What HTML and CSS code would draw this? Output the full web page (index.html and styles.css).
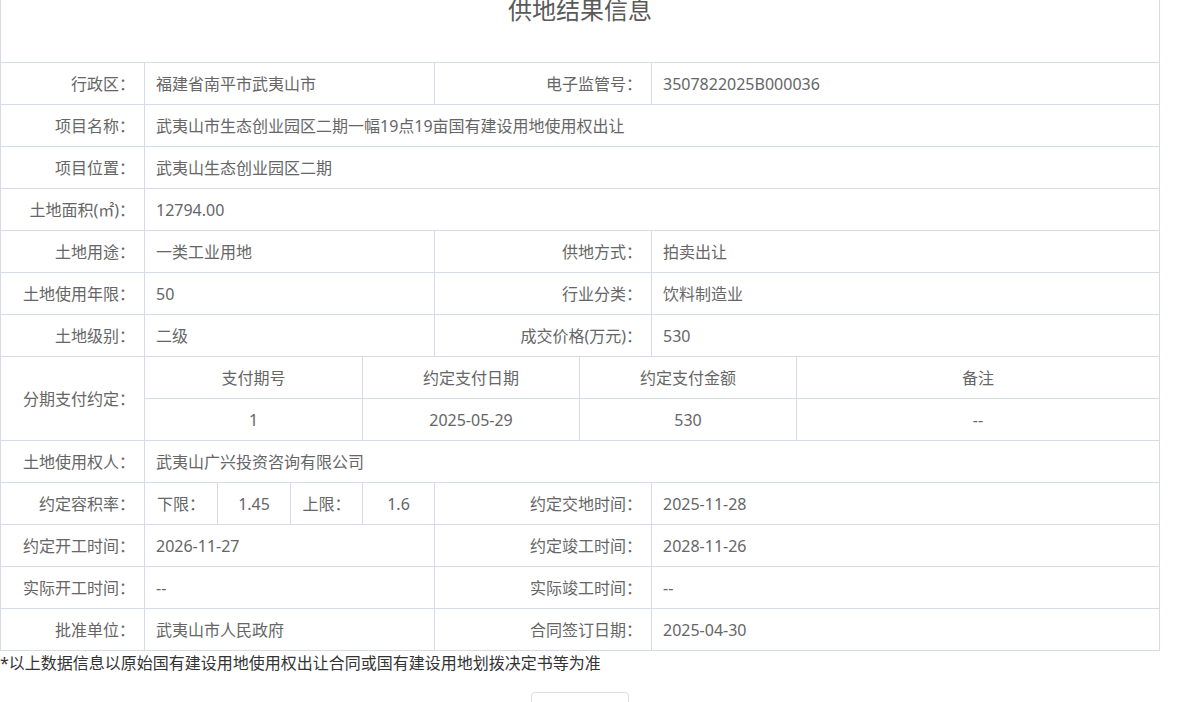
FILE: index.html
```html
<!DOCTYPE html>
<html lang="zh-CN">
<head>
<meta charset="utf-8">
<title>供地结果信息</title>
<link rel="stylesheet" href="styles.css">
</head>
<body>
<div class="page">
  <table class="info">
    <colgroup>
      <col class="c144"><col class="c73"><col class="c73"><col class="c72"><col class="c72"><col class="c145"><col class="c72"><col class="c145"><col class="c363">
    </colgroup>
    <tr class="title-row"><td colspan="9" class="title"><span>供地结果信息</span></td></tr>
    <tr>
      <td class="lbl">行政区：</td><td colspan="4" class="val">福建省南平市武夷山市</td>
      <td colspan="2" class="lbl">电子监管号：</td><td colspan="2" class="val">3507822025B000036</td>
    </tr>
    <tr>
      <td class="lbl">项目名称：</td><td colspan="8" class="val">武夷山市生态创业园区二期一幅19点19亩国有建设用地使用权出让</td>
    </tr>
    <tr>
      <td class="lbl">项目位置：</td><td colspan="8" class="val">武夷山生态创业园区二期</td>
    </tr>
    <tr>
      <td class="lbl">土地面积(㎡)：</td><td colspan="8" class="val">12794.00</td>
    </tr>
    <tr>
      <td class="lbl">土地用途：</td><td colspan="4" class="val">一类工业用地</td>
      <td colspan="2" class="lbl">供地方式：</td><td colspan="2" class="val">拍卖出让</td>
    </tr>
    <tr>
      <td class="lbl">土地使用年限：</td><td colspan="4" class="val">50</td>
      <td colspan="2" class="lbl">行业分类：</td><td colspan="2" class="val">饮料制造业</td>
    </tr>
    <tr>
      <td class="lbl">土地级别：</td><td colspan="4" class="val">二级</td>
      <td colspan="2" class="lbl">成交价格(万元)：</td><td colspan="2" class="val">530</td>
    </tr>
    <tr>
      <td rowspan="2" class="lbl">分期支付约定：</td>
      <td colspan="3" class="ctr">支付期号</td><td colspan="2" class="ctr">约定支付日期</td><td colspan="2" class="ctr">约定支付金额</td><td class="ctr">备注</td>
    </tr>
    <tr>
      <td colspan="3" class="ctr">1</td><td colspan="2" class="ctr">2025-05-29</td><td colspan="2" class="ctr">530</td><td class="ctr">--</td>
    </tr>
    <tr>
      <td class="lbl">土地使用权人：</td><td colspan="8" class="val">武夷山广兴投资咨询有限公司</td>
    </tr>
    <tr>
      <td class="lbl">约定容积率：</td>
      <td class="ctr">下限：</td><td class="ctr">1.45</td><td class="ctr">上限：</td><td class="ctr">1.6</td>
      <td colspan="2" class="lbl">约定交地时间：</td><td colspan="2" class="val">2025-11-28</td>
    </tr>
    <tr>
      <td class="lbl">约定开工时间：</td><td colspan="4" class="val">2026-11-27</td>
      <td colspan="2" class="lbl">约定竣工时间：</td><td colspan="2" class="val">2028-11-26</td>
    </tr>
    <tr>
      <td class="lbl">实际开工时间：</td><td colspan="4" class="val">--</td>
      <td colspan="2" class="lbl">实际竣工时间：</td><td colspan="2" class="val">--</td>
    </tr>
    <tr>
      <td class="lbl">批准单位：</td><td colspan="4" class="val">武夷山市人民政府</td>
      <td colspan="2" class="lbl">合同签订日期：</td><td colspan="2" class="val">2025-04-30</td>
    </tr>
  </table>
  <p class="note">*以上数据信息以原始国有建设用地使用权出让合同或国有建设用地划拨决定书等为准</p>
  <div class="actions"><button class="btn" type="button">关闭</button></div>
</div>
</body>
</html>
```

FILE: styles.css
```css
html, body {
  margin: 0;
  padding: 0;
  background: #fff;
}
body {
  font-family: "Noto Sans", "Noto Sans CJK SC", sans-serif;
  font-size: 16px;
  color: #666;
}
.page {
  width: 1159px;
}
.info {
  width: 1159px;
  table-layout: fixed;
  border-collapse: collapse;
}
.c144 { width: 144px; }
.c73 { width: 73px; }
.c72 { width: 72px; }
.c145 { width: 145px; }
.c363 { width: 363px; }
.info td {
  border: 1px solid #d6dbe8;
  height: 41px;
  padding: 0;
  white-space: nowrap;
  line-height: 20px;
}
.info .title-row td {
  border-top: none;
  height: 62px;
  vertical-align: top;
  text-align: center;
}
.title span {
  display: block;
  margin-top: -2px;
  font-size: 24px;
  line-height: 24px;
  color: #5a5a5a;
}
.lbl {
  text-align: right;
  padding-right: 9px !important;
}
.val {
  text-align: left;
  padding-left: 11px !important;
}
.ctr {
  text-align: center;
}
.note {
  margin: 0;
  font-size: 16px;
  line-height: 24px;
  color: #333;
}
.actions {
  display: flex;
  justify-content: center;
  padding-top: 17px;
}
.btn {
  width: 98px;
  height: 36px;
  border: 1px solid #dcdfe6;
  border-radius: 4px;
  background: #fff;
  color: #606266;
  font-family: inherit;
  font-size: 14px;
}
```
